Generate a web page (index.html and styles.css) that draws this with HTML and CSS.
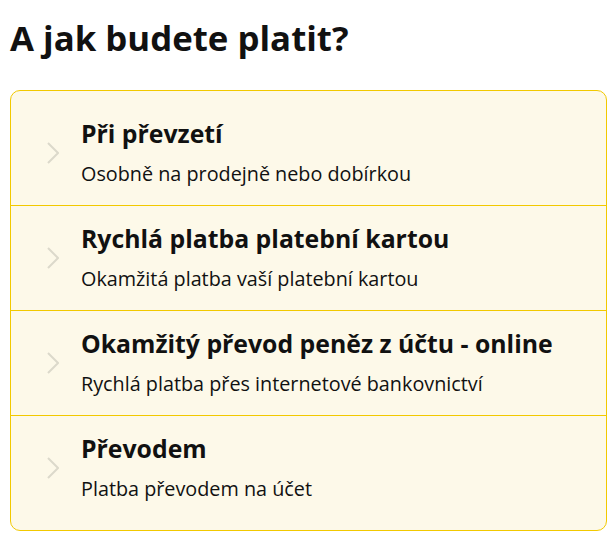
FILE: index.html
```html
<!DOCTYPE html>
<html lang="cs">
<head>
    <meta charset="UTF-8">
    <meta name="viewport" content="width=device-width, initial-scale=1.0">
    <title>Platba</title>
    <link rel="stylesheet" href="styles.css">
</head>
<body>
    <h1>A jak budete platit?</h1>
    <div class="options">
        <div class="option">
            <svg class="chevron" width="12" height="22" viewBox="0 0 12 22"><path d="M1 1l10 10L1 21" /></svg>
            <div class="text">
                <h3>Při převzetí</h3>
                <p>Osobně na prodejně nebo dobírkou</p>
            </div>
        </div>
        <div class="option">
            <svg class="chevron" width="12" height="22" viewBox="0 0 12 22"><path d="M1 1l10 10L1 21" /></svg>
            <div class="text">
                <h3>Rychlá platba platební kartou</h3>
                <p>Okamžitá platba vaší platební kartou</p>
            </div>
        </div>
        <div class="option">
            <svg class="chevron" width="12" height="22" viewBox="0 0 12 22"><path d="M1 1l10 10L1 21" /></svg>
            <div class="text">
                <h3>Okamžitý převod peněz z účtu - online</h3>
                <p>Rychlá platba přes internetové bankovnictví</p>
            </div>
        </div>
        <div class="option">
            <svg class="chevron" width="12" height="22" viewBox="0 0 12 22"><path d="M1 1l10 10L1 21" /></svg>
            <div class="text">
                <h3>Převodem</h3>
                <p>Platba převodem na účet</p>
            </div>
        </div>
    </div>
</body>
</html>
```

FILE: styles.css
```css
body{
    margin: 0;
    padding: 0 6px 0 10px;
    font-family: "Open Sans", sans-serif;
    color: #111;
    background: #fff;
}
h1{
    margin: 0;
    padding-top: 16px;
    font-size: 34.8px;
    line-height: 44px;
    font-weight: 700;
}
.options{
    margin-top: 30px;
    padding: 10px 0;
    border: 1px solid #f2c900;
    border-radius: 10px;
    background: #fdf9e9;
}
.option{
    display: flex;
    align-items: center;
    height: 104px;
    border-bottom: 1px solid #f2c900;
}
.option:last-child{
    border-bottom: none;
}
.chevron{
    margin-left: 36px;
    margin-right: 22px;
    fill: none;
    stroke: #dcd9cb;
    stroke-width: 2;
}
h3{
    margin: 0 0 0;
    font-size: 24.8px;
    line-height: 30px;
    font-weight: 700;
}
.text p{
    margin: 13px 0 2px;
    font-size: 19.8px;
    line-height: 26px;
}
```
